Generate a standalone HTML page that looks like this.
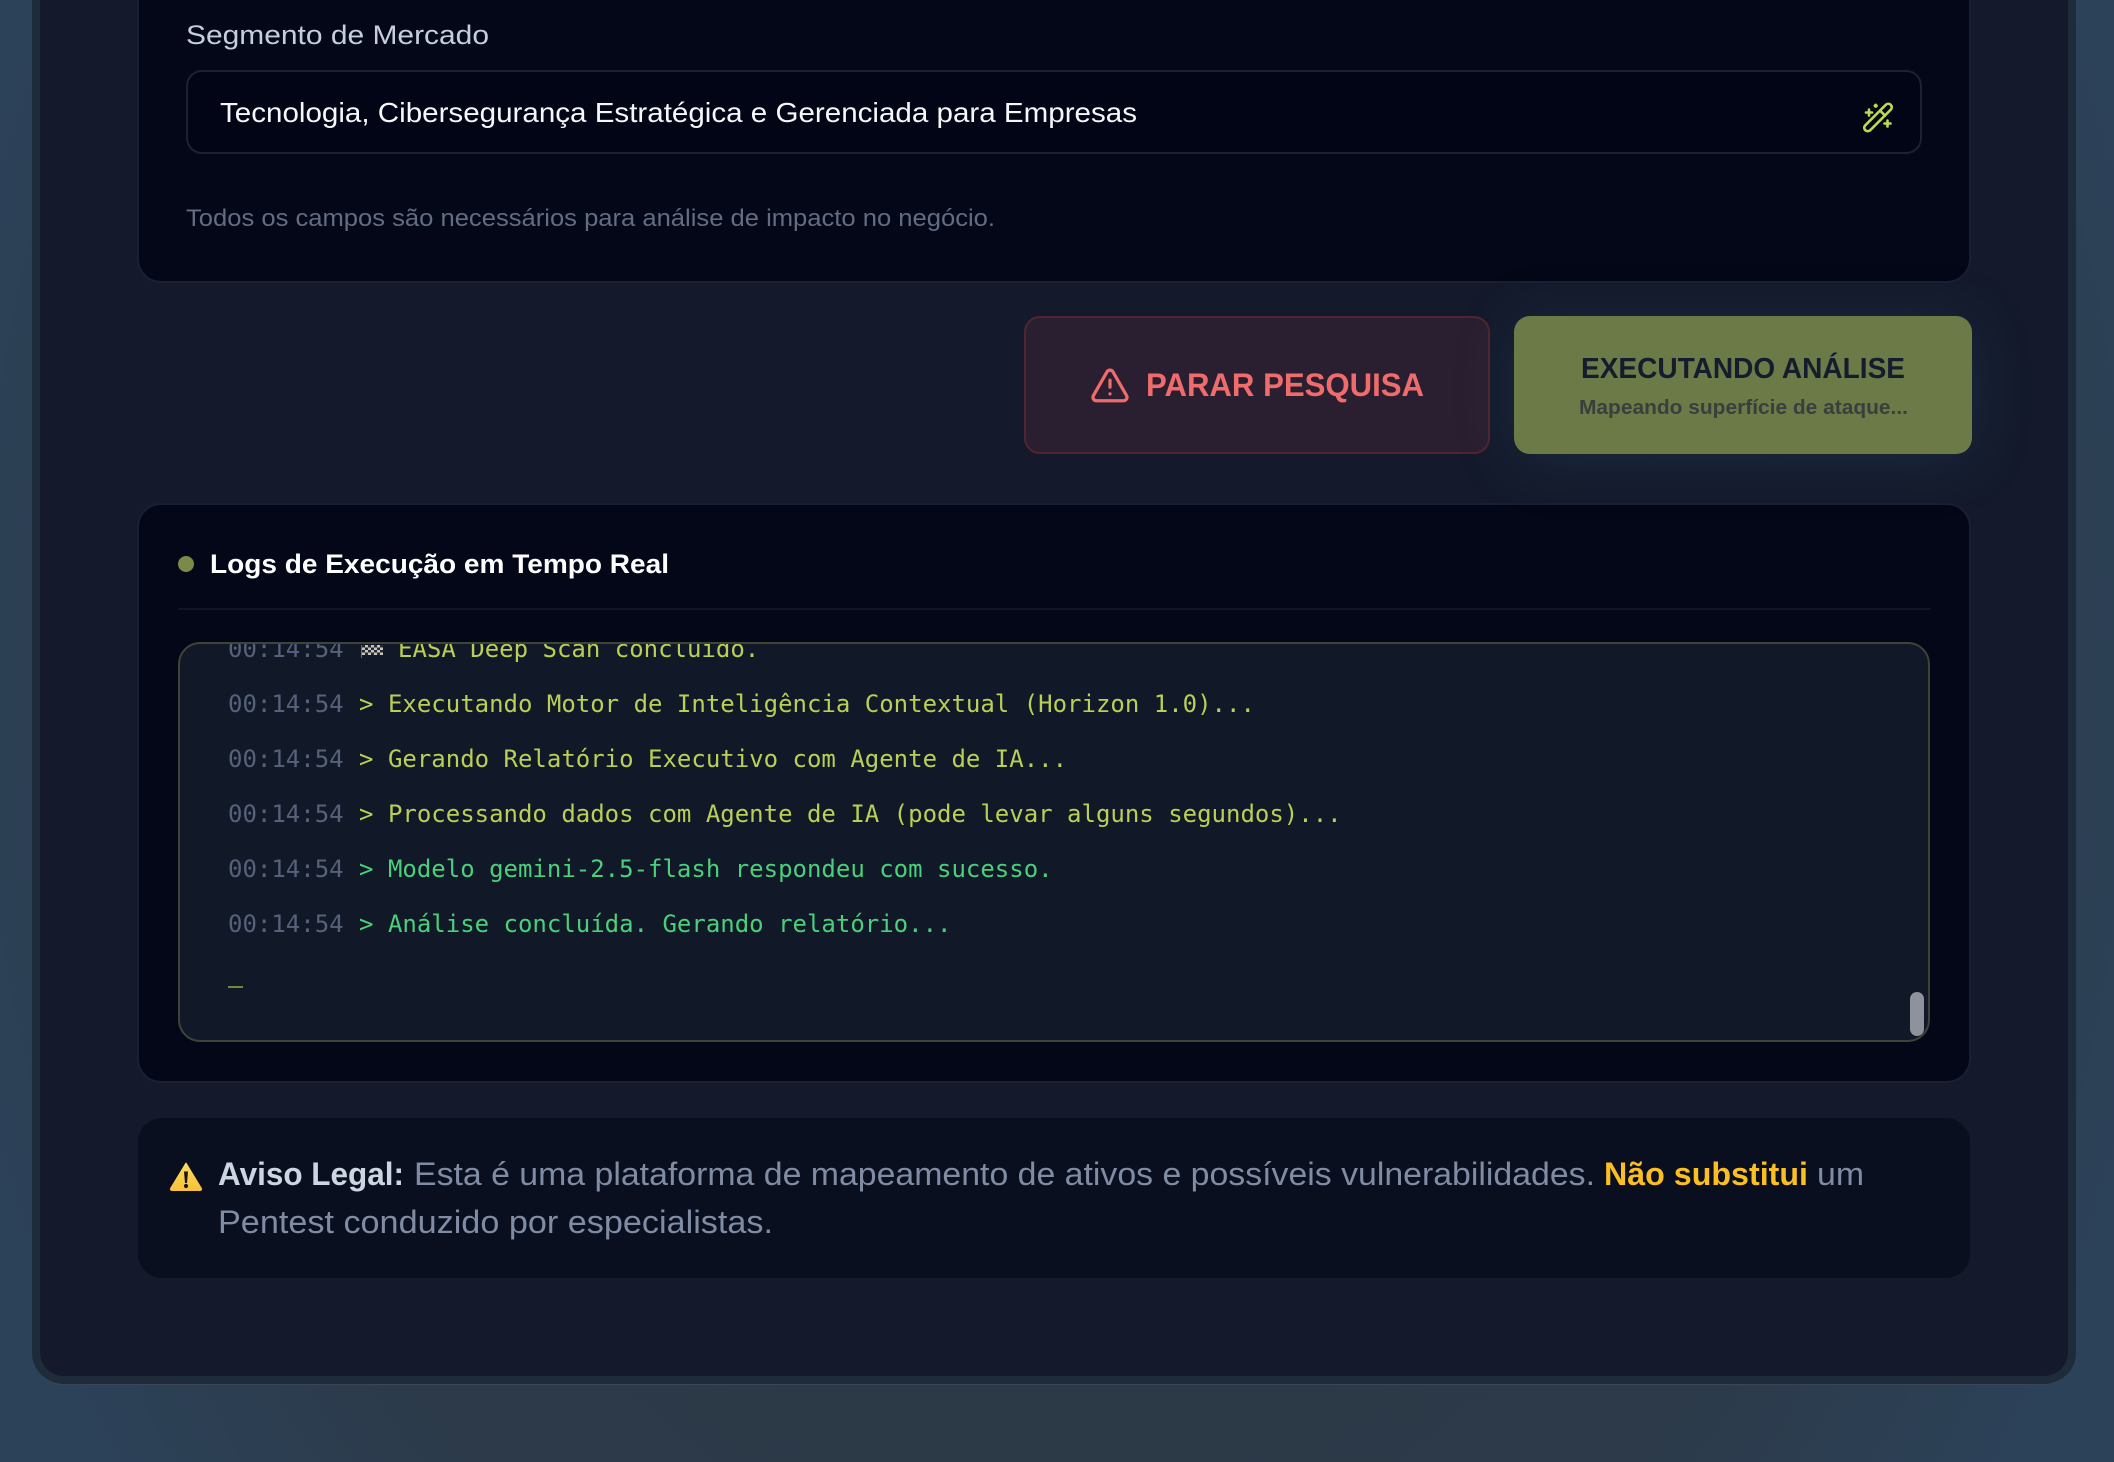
<!DOCTYPE html>
<html lang="pt-BR"><head><meta charset="utf-8"><title>Análise</title>
<style>
html,body{margin:0;padding:0;width:2114px;height:1462px;overflow:hidden;background:#2e3e4f}
.a{position:absolute;box-sizing:border-box}
#bg{left:0;top:0;width:2114px;height:1462px;background:radial-gradient(ellipse 1150px 1500px at 50% 45%,#2c3947 0%,#2c3a49 72%,#2c4259 100%)}
#shell{left:32px;top:-60px;width:2044px;height:1445px;background:#1d2b3b;border-radius:0 0 32px 32px;border-bottom:1px solid #3a4656}
#inner{left:40px;top:-60px;width:2028px;height:1436px;background:#141a2c;border-radius:0 0 24px 24px}
.card{background:#030717;border-radius:24px;border:2px solid #1a2031}
#c1{left:137px;top:-40px;width:1834px;height:323px}
#inp{left:186px;top:70px;width:1736px;height:84px;border:2px solid #1c2133;border-radius:16px;background:#020516}
#stop{left:1024px;top:316px;width:466px;height:138px;border-radius:16px;background:#2a1f30;border:2px solid #51252f}
#run{left:1514px;top:316px;width:458px;height:138px;border-radius:16px;background:#6b7a47;box-shadow:0 6px 60px 0 rgba(50,95,115,.24)}
#c2{left:137px;top:503px;width:1834px;height:580px}
#div{left:178px;top:608px;width:1752px;height:2px;background:#111626}
#dot{left:178px;top:556px;width:16px;height:16px;border-radius:50%;background:#7b8a47}
#log{left:178px;top:642px;width:1752px;height:400px;border-radius:22px;background:#111827;border:2px solid #3e4437}
#cur{left:228px;top:986px;width:15px;height:2px;background:#76843f}
#sb{left:1910px;top:992px;width:14px;height:44px;border-radius:7px;background:#8d929c}
#c3{left:138px;top:1118px;width:1832px;height:160px;border-radius:24px;background:#090f1e}
svg{position:absolute;left:0;top:0}
text{font-family:"Liberation Sans",sans-serif}
.m{font-family:"DejaVu Sans Mono","Liberation Mono",monospace;font-size:24px;white-space:pre}
</style></head><body>
<div class="a" id="bg"></div>
<div class="a" id="shell"></div>
<div class="a" id="inner"></div>
<div class="a card" id="c1"></div>
<div class="a" id="inp"></div>
<div class="a card" id="c2"></div>
<div class="a" id="stop"></div>
<div class="a" id="run"></div>
<div class="a" id="div"></div>
<div class="a" id="dot"></div>
<div class="a" id="log"></div>
<div class="a" id="cur"></div>
<div class="a" id="sb"></div>
<div class="a" id="c3"></div>
<svg width="2114" height="1462" viewBox="0 0 2114 1462" xmlns="http://www.w3.org/2000/svg">
<defs>
<clipPath id="lc"><rect x="180" y="644" width="1748" height="396"/></clipPath>
<linearGradient id="yg" x1="0" y1="0" x2="0" y2="1"><stop offset="0" stop-color="#fcdc5c"/><stop offset="1" stop-color="#f6c23a"/></linearGradient>
</defs>

<text x="186" y="44" font-size="27" fill="#c6cede" textLength="303" lengthAdjust="spacingAndGlyphs">Segmento de Mercado</text>
<text x="220" y="122" font-size="28" fill="#f6f7fa" textLength="917" lengthAdjust="spacingAndGlyphs">Tecnologia, Cibersegurança Estratégica e Gerenciada para Empresas</text>
<text x="186" y="226" font-size="24" fill="#626c82" textLength="809" lengthAdjust="spacingAndGlyphs">Todos os campos são necessários para análise de impacto no negócio.</text>

<g fill="none" stroke="#bdd94f" stroke-width="2.6" stroke-linecap="round">
<rect x="1860" y="114" width="36" height="7" rx="3.5" transform="rotate(-45 1878 117.5)"/>
<path d="M1881 111.6l4 4"/>
<path d="M1866 112.5h6M1869 109.5v6M1874.8 105.7h1.8M1875.7 104.8v1.8M1884.5 123.5h6M1887.5 120.5v6"/>
</g>

<g transform="translate(1089.6 365) scale(1.7)" fill="none" stroke="#f06b6b" stroke-width="1.9" stroke-linecap="round" stroke-linejoin="round">
<path d="m21.73 18-8-14a2 2 0 0 0-3.48 0l-8 14A2 2 0 0 0 4 21h16a2 2 0 0 0 1.73-3"/><path d="M12 9v4"/><path d="M12 17h.01"/>
</g>
<text x="1146" y="396" font-size="32" font-weight="700" fill="#f06b6b" textLength="278" lengthAdjust="spacingAndGlyphs">PARAR PESQUISA</text>
<text x="1581" y="378" font-size="29" font-weight="700" fill="#141c2e" textLength="324" lengthAdjust="spacingAndGlyphs">EXECUTANDO ANÁLISE</text>
<text x="1579" y="414" font-size="20" font-weight="700" fill="#393f3c" textLength="329" lengthAdjust="spacingAndGlyphs">Mapeando superfície de ataque...</text>

<text x="210" y="573" font-size="27" font-weight="700" fill="#ffffff" textLength="459" lengthAdjust="spacingAndGlyphs">Logs de Execução em Tempo Real</text>

<g clip-path="url(#lc)">
<text x="228" y="657" class="m" fill="#56617a">00:14:54</text>
<text x="398" y="657" class="m" fill="#b9cf55">EASA Deep Scan concluído.</text>
<g transform="translate(361 645)"><rect x="1" width="21" height="10" fill="#c4c4c4"/>
<path d="M1 0h3v2.5H1zM7 0h3v2.5H7zM13 0h3v2.5h-3zM19 0h3v2.5h-3zM4 2.5h3V5H4zM10 2.5h3V5h-3zM16 2.5h3V5h-3zM1 5h3v2.5H1zM7 5h3v2.5H7zM13 5h3v2.5h-3zM19 5h3v2.5h-3zM4 7.5h3V10H4zM10 7.5h3V10h-3zM16 7.5h3V10h-3z" fill="#2a2a2a"/>
<rect width="1" height="13" fill="#6a6f7a"/></g>
<text x="228" y="712" class="m"><tspan fill="#56617a">00:14:54</tspan><tspan dx="1" fill="#b9cf55"> &gt; Executando Motor de Inteligência Contextual (Horizon 1.0)...</tspan></text>
<text x="228" y="767" class="m"><tspan fill="#56617a">00:14:54</tspan><tspan dx="1" fill="#b9cf55"> &gt; Gerando Relatório Executivo com Agente de IA...</tspan></text>
<text x="228" y="822" class="m"><tspan fill="#56617a">00:14:54</tspan><tspan dx="1" fill="#b9cf55"> &gt; Processando dados com Agente de IA (pode levar alguns segundos)...</tspan></text>
<text x="228" y="877" class="m"><tspan fill="#56617a">00:14:54</tspan><tspan dx="1" fill="#4ad07a"> &gt; Modelo gemini-2.5-flash respondeu com sucesso.</tspan></text>
<text x="228" y="932" class="m"><tspan fill="#56617a">00:14:54</tspan><tspan dx="1" fill="#4ad07a"> &gt; Análise concluída. Gerando relatório...</tspan></text>
</g>

<path d="M186 1163 L170.5 1188.5 Q170 1190.5 172 1190.5 H200 Q202 1190.5 201.5 1188.5 Z" fill="url(#yg)" stroke="url(#yg)" stroke-width="1" stroke-linejoin="round"/>
<path d="M184 1171.5h4l-1 11.5h-2z" fill="#1a1408"/><circle cx="186" cy="1186" r="2.1" fill="#1a1408"/>
<text x="218" y="1185" font-size="32" font-weight="700" fill="#cdd5e3" textLength="186" lengthAdjust="spacingAndGlyphs">Aviso Legal:</text>
<text x="414" y="1185" font-size="32" fill="#7f8ca3" textLength="1181" lengthAdjust="spacingAndGlyphs">Esta é uma plataforma de mapeamento de ativos e possíveis vulnerabilidades.</text>
<text x="1604" y="1185" font-size="32" font-weight="700" fill="#fbbf24" textLength="204" lengthAdjust="spacingAndGlyphs">Não substitui</text>
<text x="1817" y="1185" font-size="32" fill="#7f8ca3" textLength="47" lengthAdjust="spacingAndGlyphs">um</text>
<text x="218" y="1233" font-size="32" fill="#7f8ca3" textLength="555" lengthAdjust="spacingAndGlyphs">Pentest conduzido por especialistas.</text>
</svg>
</body></html>
